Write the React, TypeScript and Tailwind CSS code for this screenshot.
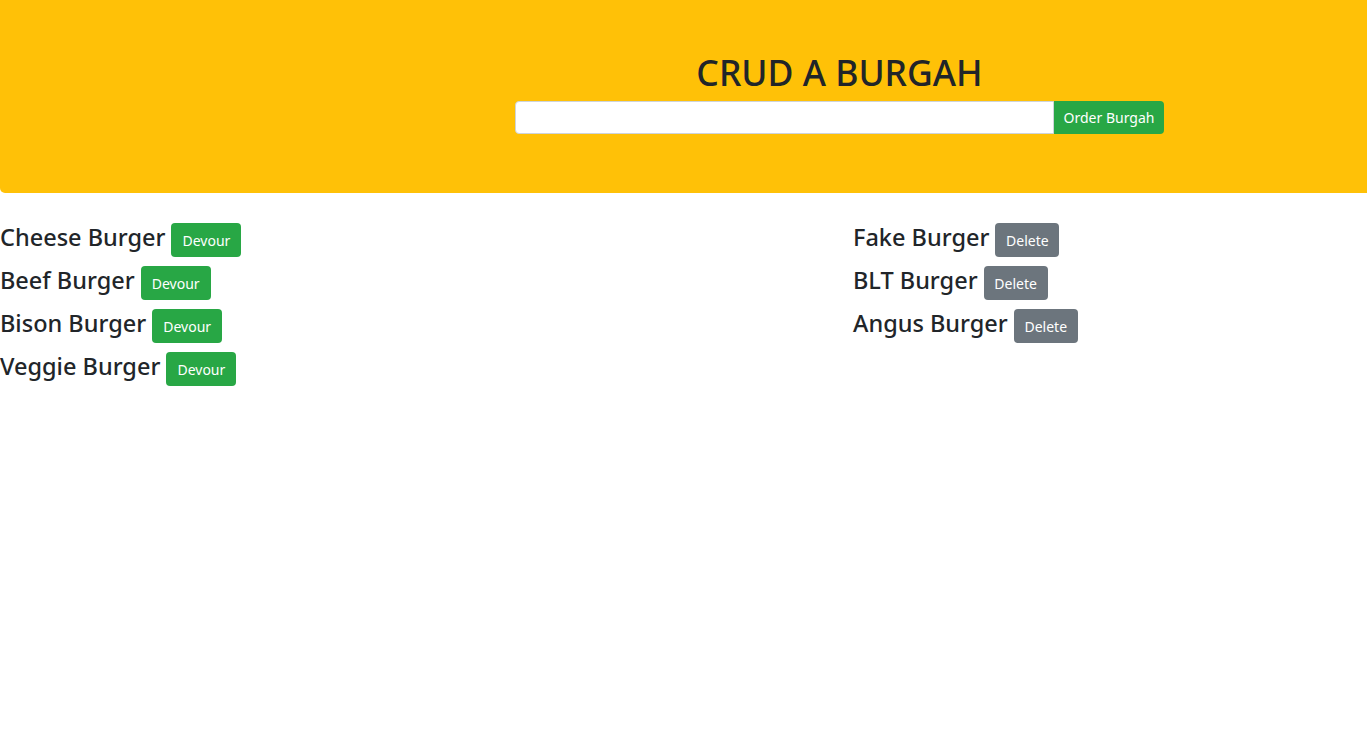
import React from 'react';

const eaten = ['Cheese Burger', 'Beef Burger', 'Bison Burger', 'Veggie Burger'];
const devoured = ['Fake Burger', 'BLT Burger', 'Angus Burger'];

export default function App() {
  return (
    <div className="min-h-[743px] bg-white text-[#212529] font-['Noto_Sans',sans-serif]">
      <header className="h-[193px] bg-[#ffc107] rounded-bl-[5px] pt-[48px] pl-[515px]">
        <div className="w-[649px] flex flex-col">
          <h1 className="text-center text-[35.5px] font-medium leading-[48px] mb-[5px]">CRUD A BURGAH</h1>
          <div className="flex h-[33px]">
            <input className="flex-1 bg-white border border-[#ced4da] rounded-l-[4px] px-3 outline-none" />
            <button className="w-[110px] bg-[#28a745] text-white text-[14px] rounded-r-[4px]">Order Burgah</button>
          </div>
        </div>
      </header>
      <main className="flex pt-[30px]">
        <div className="w-[853px] flex flex-col">
          {eaten.map((b) => (
            <div key={b} className="flex items-start gap-[6px] h-[43px]">
              <h4 className="text-[23.5px] font-medium leading-[29px]">{b}</h4>
              <button className="w-[70px] bg-[#28a745] text-white text-[14px] h-[34px] rounded-[4px]">Devour</button>
            </div>
          ))}
        </div>
        <div className="flex flex-col">
          {devoured.map((b) => (
            <div key={b} className="flex items-start gap-[6px] h-[43px]">
              <h4 className="text-[23.5px] font-medium leading-[29px]">{b}</h4>
              <button className="w-[64px] bg-[#6c757d] text-white text-[14px] h-[34px] rounded-[4px]">Delete</button>
            </div>
          ))}
        </div>
      </main>
    </div>
  );
}
